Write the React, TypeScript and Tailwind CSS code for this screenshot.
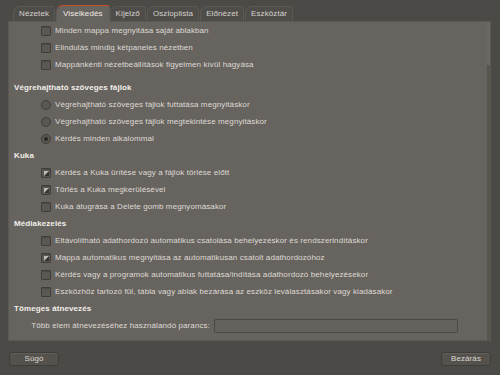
import React from "react";

const tabs = ["Nézetek", "Viselkedés", "Kijelző", "Oszloplista", "Előnézet", "Eszköztár"];

const Check = ({ on }: { on?: boolean }) => (
  <span className="relative mr-[4px] inline-block h-[10px] w-[10px] shrink-0 rounded-[1px] border border-[#403e3b] bg-[#5b5753] shadow-[inset_0_1px_0_#4e4b48]">
    {on && (
      <svg className="absolute left-[2px] top-[2px]" width="5" height="5" viewBox="0 0 5 5">
        <rect width="5" height="5" fill="#bdb9b3" />
        <polygon points="0,5 5,0 5,5" fill="#34322f" />
      </svg>
    )}
  </span>
);

const Radio = ({ on }: { on?: boolean }) => (
  <span className="mr-[4px] flex h-[10px] w-[10px] shrink-0 items-center justify-center rounded-full border border-[#403e3b] bg-[#5b5753]">
    {on && <span className="h-[4px] w-[4px] rounded-full bg-[#2a2826]" />}
  </span>
);

const Row = ({ children, on, radio }: { children: React.ReactNode; on?: boolean; radio?: boolean }) => (
  <div className="flex h-[17px] items-center pl-[32px]">
    {radio ? <Radio on={on} /> : <Check on={on} />}
    <span>{children}</span>
  </div>
);

const Head = ({ children, first }: { children: React.ReactNode; first?: boolean }) => (
  <div className={`flex h-[17px] items-center pl-[5px] font-bold text-[#f2efea] ${first ? "mt-[6px]" : ""}`}>
    {children}
  </div>
);

export default function App() {
  return (
    <div className="relative h-[375px] w-[500px] overflow-hidden bg-[#4c4a47] font-['Liberation_Sans',sans-serif] text-[8px] tracking-[0.1px] text-[#dedad4]">
      {/* fülek */}
      <div className="flex h-[21px] items-end pl-[13px]">
        {tabs.map((t) => {
          const active = t === "Viselkedés";
          return (
            <div
              key={t}
              className={
                active
                  ? "relative z-10 -mb-px flex h-[17px] items-center rounded-tl-[7px] rounded-tr-[3px] border border-b-0 border-[#5e5a56] border-t-[#c2502c] bg-[#67635f] px-[6px] text-[#f0ece6]"
                  : "mr-[1px] flex h-[15px] items-center rounded-tl-[7px] rounded-tr-[3px] border border-b-0 border-[#5c5955] bg-[#4f4d4a] px-[5px] text-[#d6d2cc]"
              }
            >
              {t}
            </div>
          );
        })}
      </div>

      {/* panel */}
      <div className="ml-[8px] flex h-[320px] w-[483px] border border-[#5c5955] bg-[#67635f]">
        <div className="flex-1">
          <Row>Minden mappa megnyitása saját ablakban</Row>
          <Row>Elindulás mindig kétpaneles nézetben</Row>
          <Row>Mappánkénti nézetbeállítások figyelmen kívül hagyása</Row>

          <Head first>Végrehajtható szöveges fájlok</Head>
          <Row radio>Végrehajtható szöveges fájlok futtatása megnyitáskor</Row>
          <Row radio>Végrehajtható szöveges fájlok megtekintése megnyitáskor</Row>
          <Row radio on>Kérdés minden alkalommal</Row>

          <Head>Kuka</Head>
          <Row on>Kérdés a Kuka ürítése vagy a fájlok törlése előtt</Row>
          <Row on>Törlés a Kuka megkerülésével</Row>
          <Row>Kuka átugrása a Delete gomb megnyomásakor</Row>

          <Head>Médiakezelés</Head>
          <Row>Eltávolítható adathordozó automatikus csatolása behelyezéskor és rendszerindításkor</Row>
          <Row on>Mappa automatikus megnyitása az automatikusan csatolt adathordozóhoz</Row>
          <Row>Kérdés vagy a programok automatikus futtatása/indítása adathordozó behelyezésekor</Row>
          <Row>Eszközhöz tartozó fül, tábla vagy ablak bezárása az eszköz leválasztásakor vagy kiadásakor</Row>

          <Head>Tömeges átnevezés</Head>
          <div className="flex h-[17px] items-center">
            <span className="w-[205px] pr-[4px] text-right">Több elem átnevezéséhez használandó parancs:</span>
            <div className="h-[14px] w-[244px] rounded-[2px] border border-[#4a4845] bg-[#65615d]" />
          </div>
        </div>
        {/* görgetősáv */}
        <div className="flex w-[3px] flex-col">
          <div className="h-[43px] bg-[#6b6763]" />
          <div className="flex-1 bg-[#58554f]" />
        </div>
      </div>

      {/* gombok */}
      <div className="mt-[11px] flex justify-between pl-[9px] pr-[9px]">
        <button className="h-[14px] w-[50px] rounded-[3px] border border-[#3f3d3a] bg-[#55524e] text-[8px] text-[#dcd8d2] shadow-[inset_0_1px_0_#625f5b]">
          Súgó
        </button>
        <button className="h-[14px] w-[50px] rounded-[3px] border border-[#3f3d3a] bg-[#55524e] text-[8px] text-[#dcd8d2] shadow-[inset_0_1px_0_#625f5b]">
          Bezárás
        </button>
      </div>
    </div>
  );
}
